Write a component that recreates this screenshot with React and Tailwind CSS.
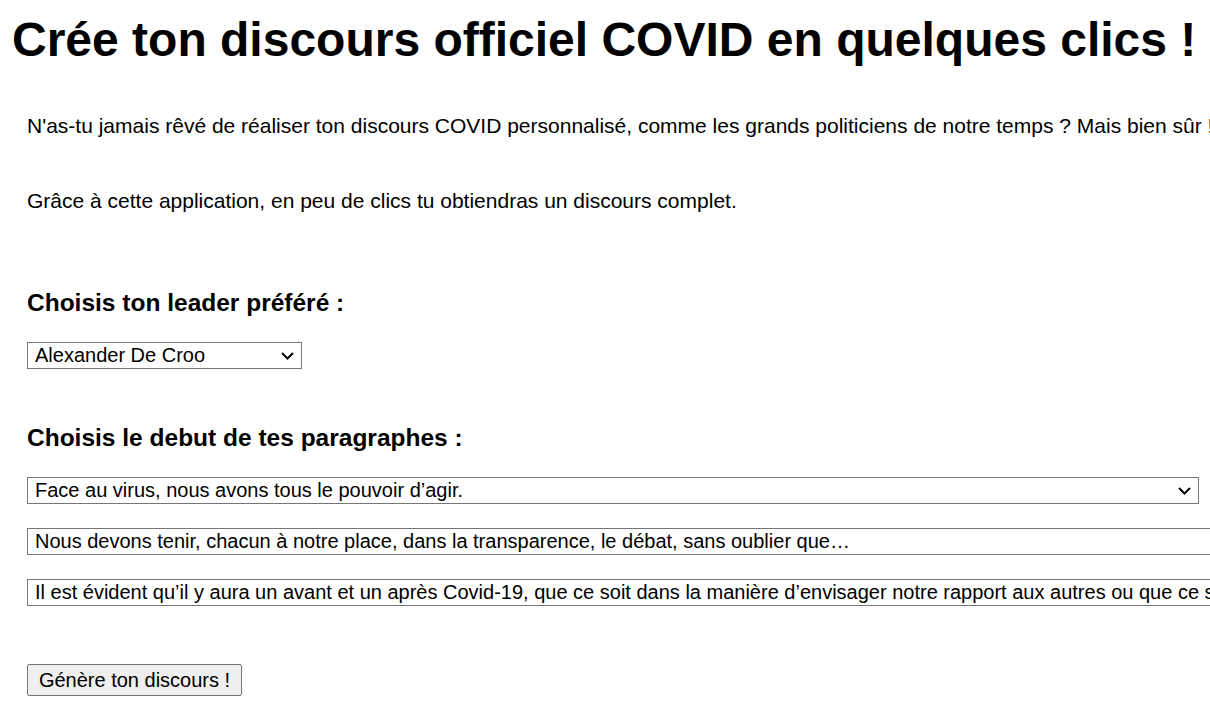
import { useState } from 'react';

const leaders = ['Alexander De Croo', 'Emmanuel Macron', 'Sophie Wilmès', 'Angela Merkel'];

const starts = [
  'Face au virus, nous avons tous le pouvoir d’agir.',
  'Nous devons tenir, chacun à notre place, dans la transparence, le débat, sans oublier que…',
  'Il est évident qu’il y aura un avant et un après Covid-19, que ce soit dans la manière d’envisager notre rapport aux autres ou que ce soit dans notre façon de vivre.',
];

function Chevron() {
  return (
    <svg className="pointer-events-none absolute right-[8px] top-1/2 -translate-y-1/2 w-[13px] h-[8px]" viewBox="0 0 13 8" fill="none" stroke="#000" strokeWidth={2}>
      <path d="M1 1l5.5 5.5L12 1" />
    </svg>
  );
}

export default function App() {
  const [leader, setLeader] = useState(leaders[0]);
  const [first, setFirst] = useState(starts[0]);

  return (
    <div className="h-[714px] overflow-hidden bg-white text-black font-['Liberation_Sans',Arial,sans-serif]">
      <h1 className="mt-[12px] pl-[12px] text-[48px] leading-[55px] font-bold whitespace-nowrap">
        Crée ton discours officiel COVID en quelques clics !
      </h1>

      <div className="pl-[27px]">
        <p className="mt-[47px] text-[21px] leading-[24px] whitespace-nowrap">
          N'as-tu jamais rêvé de réaliser ton discours COVID personnalisé, comme les grands politiciens de notre temps ? Mais bien sûr !
        </p>
        <p className="mt-[51px] text-[21px] leading-[24px] whitespace-nowrap">
          Grâce à cette application, en peu de clics tu obtiendras un discours complet.
        </p>

        <h3 className="mt-[76px] text-[24.5px] leading-[28px] font-bold">Choisis ton leader préféré :</h3>
        <div className="relative mt-[25px] w-[275px]">
          <select
            value={leader}
            onChange={e => setLeader(e.target.value)}
            className="appearance-none block w-full h-[27px] border border-[#767676] bg-white px-[7px] text-[20px] leading-[23px] outline-none"
          >
            {leaders.map(l => <option key={l}>{l}</option>)}
          </select>
          <Chevron />
        </div>

        <h3 className="mt-[55px] text-[24.5px] leading-[28px] font-bold">Choisis le debut de tes paragraphes :</h3>
        <div className="relative mt-[25px] w-[1172px]">
          <select
            value={first}
            onChange={e => setFirst(e.target.value)}
            className="appearance-none block w-full h-[27px] border border-[#767676] bg-white px-[7px] text-[20px] leading-[23px] outline-none"
          >
            {starts.map(s => <option key={s}>{s}</option>)}
          </select>
          <Chevron />
        </div>
        <input
          type="text"
          defaultValue={starts[1]}
          className="block mt-[24px] w-[1400px] h-[27px] border border-[#767676] bg-white px-[7px] text-[20px] leading-[23px] outline-none"
        />
        <input
          type="text"
          defaultValue={starts[2]}
          className="block mt-[24px] w-[1400px] h-[27px] border border-[#767676] bg-white px-[7px] text-[20px] leading-[23px] outline-none"
        />

        <button className="block mt-[58px] w-[215px] h-[32px] border border-[#767676] rounded-[2px] bg-[#efefef] text-[20px] leading-[23px] text-center">
          Génère ton discours !
        </button>
      </div>
    </div>
  );
}
